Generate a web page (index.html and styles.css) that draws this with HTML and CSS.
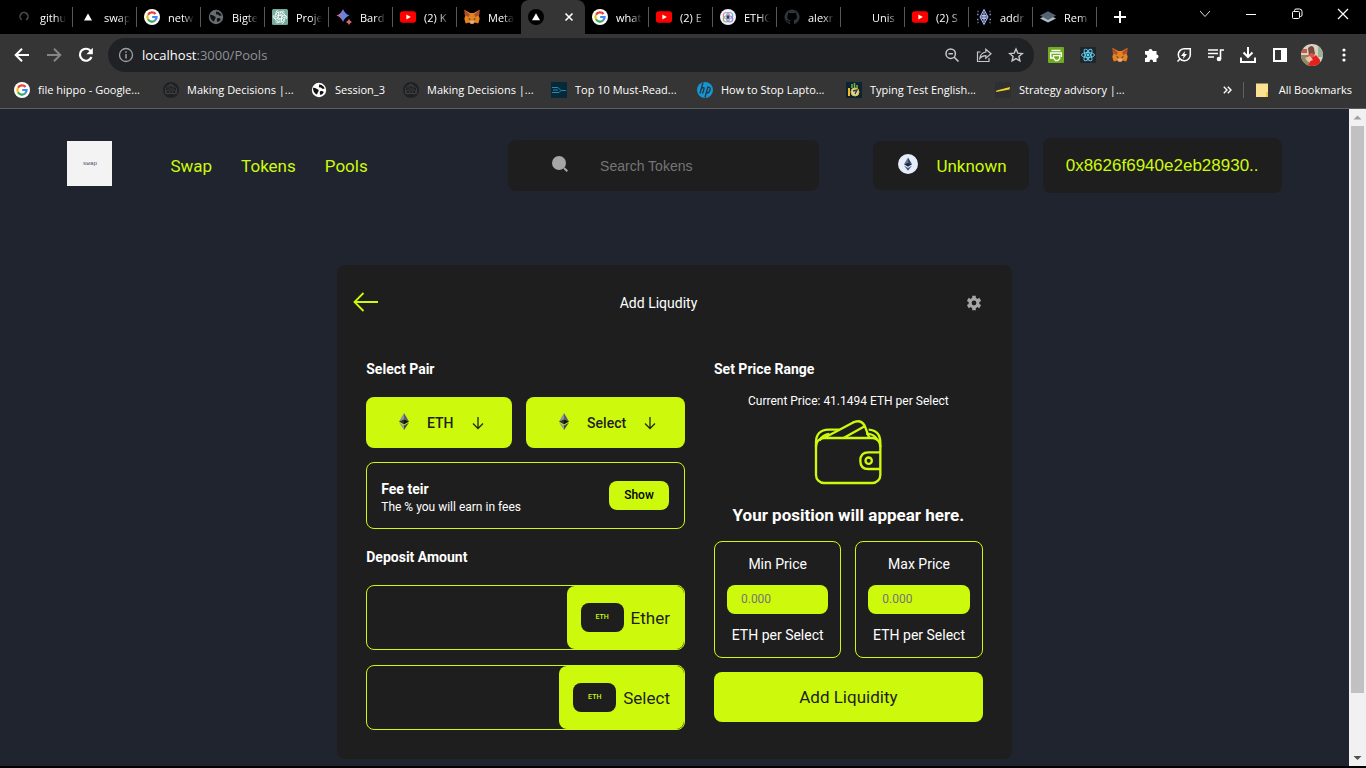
FILE: index.html
```html
<!DOCTYPE html>
<html lang="en">
<head>
<meta charset="utf-8">
<title>Swap - Pools</title>
<link rel="stylesheet" href="styles.css">
</head>
<body>
<svg class="defs" aria-hidden="true">
  <symbol id="google" viewBox="0 0 16 16">
    <circle cx="8" cy="8" r="8" fill="#fff"/>
    <g fill="none" stroke-width="2.2">
      <path d="M11.6 5A4.6 4.6 0 0 0 4 5.7" stroke="#ea4335"/>
      <path d="M4 5.7a4.6 4.6 0 0 0 0 4.6" stroke="#fbbc05"/>
      <path d="M4 10.3a4.6 4.6 0 0 0 7 1.2" stroke="#34a853"/>
      <path d="M11 11.5A4.6 4.6 0 0 0 12.6 8H8.2" stroke="#4285f4"/>
    </g>
  </symbol>
  <symbol id="youtube" viewBox="0 0 16 16">
    <rect y="2.3" width="16" height="11.4" rx="2.6" fill="#f00"/>
    <path d="M6.4 5.4v5.2L10.8 8z" fill="#fff"/>
  </symbol>
  <symbol id="github" viewBox="0 0 16 16">
    <path d="M8 .5a7.5 7.5 0 0 0-2.4 14.6c.4.1.5-.2.5-.4v-1.4c-2 .4-2.5-.9-2.5-.9-.4-.9-.9-1.1-.9-1.1-.7-.5.1-.5.1-.5.8.1 1.200.8 1.200.8.7 1.200 1.800.8 2.200.6.1-.5.300-.8.500-1-1.700-.2-3.400-.8-3.400-3.700 0-.8.300-1.500.8-2-.1-.2-.4-1 .1-2.100 0 0 .6-.2 2 .8a7 7 0 0 1 3.800 0c1.400-1 2-.8 2-.8.5 1.100.2 1.900.1 2.100.5.500.8 1.200.8 2 0 2.900-1.700 3.500-3.400 3.700.3.200.5.7.5 1.400v2.100c0 .2.1.500.5.400A7.500 7.500 0 0 0 8 .5z" fill="currentColor"/>
  </symbol>
  <symbol id="globe" viewBox="0 0 16 16">
    <circle cx="8" cy="8" r="7.200" fill="currentColor"/>
    <path d="M2 6c2-.6 3 1 4.500 1.300S8 9 7 10s0 2-1.300 2.600C3.500 11.500 2 9 2 6zM8 2.500c.5 1-.5 1.500 0 2.500s2 0 2.500 1S13 7 13.500 6.500 11 2 8 2.500zM9 9.500c1.500-1 3 0 3.800.5-.6 1.500-1.800 2.500-3.300 3-.8-1-.8-2.500-.5-3.500z" fill="#111"/>
  </symbol>
  <symbol id="metamask" viewBox="0 0 16 16">
    <path d="M.5.700 6.200 4h3.600L15.500.700l-.8 4.500.5.400-.5 1 1 3.200-1.400 4.700-3.500-1-1.600 1.500H6.800l-1.600-1.500-3.500 1-1.400-4.700 1-3.200-.5-1 .5-.4z" fill="#e8821e"/>
    <path d="m.5.700 5.200 4.500L5 8l-3.700-1.400L.5 5.300zM15.500.700l-5.200 4.500L11 8l3.700-1.400.8-1.300z" fill="#a9512c"/>
    <path d="m4 9 2.500 1L6 11.200zM12 9l-2.500 1 .5 1.200z" fill="#2b3846"/>
    <path d="m5.500 12.500 1.200-.8h2.600l1.200.8-1.300 1.800H6.800z" fill="#cbb8a9"/>
  </symbol>
  <symbol id="emblem" viewBox="0 0 16 16">
    <circle cx="8" cy="8" r="8" fill="#202124"/>
    <g fill="none" stroke="#3d3d3d"><circle cx="8" cy="5.500" r="2"/><circle cx="5" cy="10" r="2"/><circle cx="11" cy="10" r="2"/><path d="M2.500 6 8 2l5.500 4v5.500H2.500z"/></g>
  </symbol>
  <symbol id="ether" viewBox="0 0 10 17">
    <path d="M5 0 0 8.500 5 6.200z" fill="#8a92a0"/><path d="m5 0 5 8.500L5 6.200z" fill="#5c6068"/>
    <path d="M0 8.500 5 6.200v5.300z" fill="#33343a"/><path d="m10 8.500-5-2.300v5.300z" fill="#141418"/>
    <path d="m0 9.600 5 3V17z" fill="#939a8f"/><path d="m10 9.600-5 3V17z" fill="#474a4c"/>
  </symbol>
  <symbol id="down" viewBox="0 0 12 14">
    <path d="M6 1v11.500M1 7.500l5 5 5-5" fill="none" stroke="#222a14" stroke-width="1.300"/>
  </symbol>
</svg>

<header class="browser">
  <div class="tabs">
    <div class="tab"><svg class="ico" viewBox="0 0 16 16"><circle cx="8" cy="7.500" r="4" fill="none" stroke="#4b4b4b" stroke-width="1.600" stroke-dasharray="20 5" transform="rotate(125 8 7.500)"/></svg><span>githu</span></div>
    <div class="tab"><svg class="ico" viewBox="0 0 16 16"><path d="m8 4.500 4 7H4z" fill="#fff"/></svg><span>swap</span></div>
    <div class="tab"><svg class="ico"><use href="#google"/></svg><span>netw</span></div>
    <div class="tab"><svg class="ico grey"><use href="#globe"/></svg><span>Bigte</span></div>
    <div class="tab"><svg class="ico" viewBox="0 0 16 16"><rect width="16" height="16" rx="1.500" fill="#75a99c"/><g fill="none" stroke="#fff" stroke-width=".8"><path id="petal" d="M8 6.200V4.500a2.600 2.600 0 0 1 4.700-1.300M8 6.200l3.500-2"/><use href="#petal" transform="rotate(60 8 8)"/><use href="#petal" transform="rotate(120 8 8)"/><use href="#petal" transform="rotate(180 8 8)"/><use href="#petal" transform="rotate(240 8 8)"/><use href="#petal" transform="rotate(300 8 8)"/><circle cx="8" cy="8" r="1.800"/><circle cx="8" cy="8" r="5.200"/></g></svg><span>Proje</span></div>
    <div class="tab"><svg class="ico" viewBox="0 0 16 16"><linearGradient id="bg"><stop offset="0" stop-color="#e06b7c"/><stop offset=".5" stop-color="#6f7fe0"/><stop offset="1" stop-color="#4d8be8"/></linearGradient><path d="M7 0q1.800 4.700 6.500 6.500Q8.800 8.300 7 13 5.200 8.300.5 6.500 5.200 4.700 7 0z" fill="url(#bg)"/><path d="M13 10q.8 2.200 3 3-2.200.8-3 3-.8-2.200-3-3 2.200-.8 3-3z" fill="#d96570"/></svg><span>Bard</span></div>
    <div class="tab"><svg class="ico"><use href="#youtube"/></svg><span>(2) K</span></div>
    <div class="tab bare"><svg class="ico"><use href="#metamask"/></svg><span>Meta</span></div>
    <div class="tab active"><svg class="ico" viewBox="0 0 16 16"><circle cx="8" cy="8" r="8" fill="#000"/><path d="m8 4.300 4 7H4z" fill="#fff"/></svg><button class="plain" aria-label="Close tab"><svg width="10" height="10" viewBox="0 0 10 10"><path d="m1.500 1.500 7 7m0-7-7 7" stroke="#fff" stroke-width="1.600"/></svg></button></div>
    <div class="tab"><svg class="ico"><use href="#google"/></svg><span>what</span></div>
    <div class="tab"><svg class="ico"><use href="#youtube"/></svg><span>(2) E</span></div>
    <div class="tab"><svg class="ico" viewBox="0 0 16 16"><circle cx="8" cy="8" r="8" fill="#f4f1f8"/><g fill="none" stroke-width="1.200"><circle cx="6.300" cy="6.500" r="3" stroke="#e5899f"/><circle cx="9.700" cy="6.500" r="3" stroke="#6cb8e4"/><circle cx="6.300" cy="10" r="3" stroke="#7dba85"/><circle cx="9.700" cy="10" r="3" stroke="#a182dc"/></g><path d="m8 5.500 1.500 2.500L8 10.500 6.500 8z" fill="#3b3473"/></svg><span>ETHG</span></div>
    <div class="tab"><svg class="ico dim"><use href="#github"/></svg><span>alexr</span></div>
    <div class="tab"><span class="ico"></span><span>Unis</span></div>
    <div class="tab"><svg class="ico"><use href="#youtube"/></svg><span>(2) S</span></div>
    <div class="tab"><svg class="ico" viewBox="0 0 16 16"><path d="m8 .5 4 7.500-4 7.500L4 8z" fill="#242d48" stroke="#b5c3f3"/><path d="M4 8h8M8 3v10M5.500 6.500h5M5.500 9.500h5" stroke="#b5c3f3"/><path d="M1.500 2.500h1M13.500 2.500h1M1 5.500h1.500M13.500 5.500H15M1 10.500h1.500M13.500 10.500H15M1.500 13.500h1M13.500 13.500h1" stroke="#8495cc" stroke-width="1.500"/></svg><span>addr</span></div>
    <div class="tab"><svg class="ico" viewBox="0 0 16 16"><path d="m0 9.500 8-4 8 4-8 4z" fill="#aebbc7"/><path d="m0 6.500 8-4.200 8 4.200-8 4.500z" fill="#566371"/></svg><span>Rem</span></div>
    <button class="plain add" aria-label="New tab"><svg width="12" height="12" viewBox="0 0 12 12"><path d="M6 0v12M0 6h12" stroke="#fff" stroke-width="2"/></svg></button>
    <div class="window">
      <button class="plain" aria-label="Search tabs"><svg width="12" height="12" viewBox="0 0 12 12"><path d="m1 3 5 5.500L11 3" fill="none" stroke="#ddd"/></svg></button>
      <button class="plain" aria-label="Minimize"><svg width="12" height="12" viewBox="0 0 12 12"><path d="M1 6.500h10" stroke="#fff"/></svg></button>
      <button class="plain" aria-label="Restore"><svg width="12" height="12" viewBox="0 0 12 12"><path d="M3.500 3V2.500Q3.500 1 5 1h3.500Q11 1 11 3.500V7q0 1.500-1.500 1.500H9" fill="none" stroke="#fff"/><rect x="1.500" y="3.500" width="7" height="7" rx="1" fill="none" stroke="#fff"/></svg></button>
      <button class="plain" aria-label="Close"><svg width="12" height="12" viewBox="0 0 12 12"><path d="m1 1 10 10M11 1 1 11" stroke="#fff" stroke-width="1.200"/></svg></button>
    </div>
  </div>

  <div class="toolbar">
    <button class="plain" aria-label="Back"><svg width="16" height="16" viewBox="0 0 16 16"><path d="M15 8H2m6-6.300L1.700 8 8 14.300" fill="none" stroke="#fff" stroke-width="2"/></svg></button>
    <button class="plain" aria-label="Forward"><svg width="16" height="16" viewBox="0 0 16 16"><path d="M1 8h13M8 1.700 14.300 8 8 14.300" fill="none" stroke="#858585" stroke-width="2"/></svg></button>
    <button class="plain" aria-label="Reload"><svg width="16" height="16" viewBox="0 0 16 16"><path d="M13.500 10A6 6 0 1 1 12.800 4.200" fill="none" stroke="#fff" stroke-width="2.200"/><path d="M14.800.8v6.400H8.400z" fill="#fff"/></svg></button>
    <div class="omnibox">
      <svg width="16" height="16" viewBox="0 0 16 16"><circle cx="8" cy="8" r="6.500" fill="none" stroke="#9aa0a6" stroke-width="1.300"/><path d="M8 7v4.500M8 4.300v1.500" stroke="#9aa0a6" stroke-width="1.500"/></svg>
      <p class="url"><b>localhost</b>:3000/Pools</p>
      <button class="plain" aria-label="Zoom"><svg width="16" height="16" viewBox="0 0 16 16"><circle cx="6.700" cy="6.700" r="4.700" fill="none" stroke="#c7c7c7" stroke-width="1.500"/><path d="m10.200 10.200 4.300 4.300M4.500 6.700h4.400" stroke="#c7c7c7" stroke-width="1.600"/></svg></button>
      <button class="plain" aria-label="Share"><svg width="16" height="16" viewBox="0 0 16 16"><path d="M4.500 5H1.500v9.500H13V11" fill="none" stroke="#c7c7c7" stroke-width="1.200"/><path d="M9.800 2.200 15 6.700l-5.200 4.500V8.700c-3 0-4.500.8-6 2.800.4-3.500 2.500-6 6-6.500z" fill="none" stroke="#c7c7c7" stroke-width="1.200"/></svg></button>
      <button class="plain" aria-label="Bookmark"><svg width="16" height="16" viewBox="0 0 16 16"><path d="m8 2 1.800 4.100 4.500.4-3.400 3 1 4.400L8 11.600l-3.900 2.300 1-4.400-3.400-3 4.500-.4z" fill="none" stroke="#c7c7c7" stroke-width="1.400"/></svg></button>
    </div>
    <div class="extensions">
      <svg class="ico" viewBox="0 0 16 16"><rect width="16" height="16" rx="1" fill="#6fac1f"/><path d="M3.500 3.500h9" stroke="#fff" stroke-width="1.500"/><path d="M5 11H2.700V6h10.600v4" fill="none" stroke="#fff" stroke-width="1.500"/><path d="M5.500 8.700h6.200v3L9.700 13.500H7.500l-2-2.500z" fill="none" stroke="#fff" stroke-width="1.300"/></svg>
      <svg class="ico" viewBox="0 0 16 16"><rect width="16" height="16" fill="#1f252d"/><g fill="none" stroke="#61dafb" stroke-width=".9"><ellipse cx="8" cy="8" rx="6.500" ry="2.500"/><ellipse cx="8" cy="8" rx="6.500" ry="2.500" transform="rotate(60 8 8)"/><ellipse cx="8" cy="8" rx="6.500" ry="2.500" transform="rotate(120 8 8)"/></g><circle cx="8" cy="8" r="1.400" fill="#61dafb"/></svg>
      <svg class="ico"><use href="#metamask"/></svg>
      <svg class="ico" viewBox="0 0 16 16"><path d="M1 4h3.500a2 2 0 1 1 4 0H12.500v3.500a2 2 0 1 1 0 4V15H9v-.7a1.700 1.700 0 0 0-3.400 0v.7H1v-4h.5a1.700 1.700 0 0 0 0-3.500H1z" fill="#fff"/></svg>
      <svg class="ico" viewBox="0 0 16 16"><path d="M14.300 1.700H8.500a6 6 0 1 0 5.800 6zM4 12 1.500 14.500" fill="none" stroke="#fff" stroke-width="1.500"/><path d="M9 4 5 9h2.500L7 12l4-5H8.500z" fill="#fff"/></svg>
      <svg class="ico" viewBox="0 0 16 16"><path d="M0 3h10M0 6.500h10M0 10h6M12.500 12V3H16" fill="none" stroke="#fff" stroke-width="1.600"/><circle cx="11" cy="12" r="2.300" fill="#fff"/></svg>
      <svg class="ico" viewBox="0 0 16 16"><path d="M8 0v9.500M3.500 5.500 8 10l4.500-4.500M1 10.500V15h14v-4.500" fill="none" stroke="#fff" stroke-width="2"/></svg>
      <svg class="ico" viewBox="0 0 16 16"><path d="M2 2h12v12H2z" fill="none" stroke="#fff" stroke-width="2"/><path d="M9 2h5v12H9z" fill="#fff"/></svg>
      <svg class="avatar" viewBox="0 0 22 22"><clipPath id="round"><circle cx="11" cy="11" r="11"/></clipPath><g clip-path="url(#round)"><path d="M0 0h22v22H0z" fill="#d8d3c4"/><path d="M0 11h8v11H0z" fill="#8c8a63"/><path d="M17 2h5v11h-5z" fill="#9bb193"/><path d="M0 5h6v4H0z" fill="#c55a4a"/><path d="M7 4q4-4 6 0l1 6-6 2z" fill="#7b4a3a"/><path d="m6 12 4-3 4 1-2 5-5 1z" fill="#d8574b"/><path d="m7 22 3-7 5-4 4 5v6z" fill="#e3211d"/><path d="m4 14 5-2 3 4-5 2z" fill="#f0c0a6"/></g></svg>
      <svg class="ico" viewBox="0 0 16 16"><g fill="#fff"><circle cx="8" cy="3" r="1.600"/><circle cx="8" cy="8" r="1.600"/><circle cx="8" cy="13" r="1.600"/></g></svg>
    </div>
  </div>

  <nav class="bookmarks" aria-label="Bookmarks">
    <a class="w149" href="#"><svg class="ico"><use href="#google"/></svg>file hippo - Google...</a>
    <a class="w148" href="#"><svg class="ico"><use href="#emblem"/></svg>Making Decisions |...</a>
    <a class="w92" href="#"><svg class="ico white"><use href="#globe"/></svg>Session_3</a>
    <a class="w148" href="#"><svg class="ico"><use href="#emblem"/></svg>Making Decisions |...</a>
    <a class="w146" href="#"><svg class="ico" viewBox="0 0 16 16"><rect width="16" height="16" fill="#05293a"/><path d="M1 5.500h6l3 3h5M2 8h5M1 10.500h7l2-2" fill="none" stroke="#298aa9"/></svg>Top 10 Must-Read...</a>
    <a class="w149" href="#"><svg class="ico" viewBox="0 0 16 16"><circle cx="8" cy="8" r="8" fill="#1595d1"/><path d="M6 .5 3 11.500M4.500 6.500q3-2 2.500.5l-1.500 4.500M11 4.500 8 15.500M10.500 5.500q3.500-1 2.500 2.500-1 3.500-4 3" fill="none" stroke="#253645" stroke-width="1.300"/></svg>How to Stop Lapto...</a>
    <a class="w149" href="#"><svg class="ico" viewBox="0 0 16 16"><rect width="16" height="16" fill="#0d2332"/><path d="M6 6V2M8.500 6V1M11 6V3" stroke="#70b744" stroke-width="1.500"/><path d="M3 6v8" stroke="#e5bd2e" stroke-width="2"/><circle cx="9" cy="10" r="4" fill="#ddd6a1" stroke="#e5bd2e"/><path d="m7 9 4-1-2 4" fill="none" stroke="#24384a" stroke-width="1.300"/></svg>Typing Test English...</a>
    <a href="#"><svg class="ico" viewBox="0 0 16 16"><rect width="16" height="16" fill="#2e2e33"/><path d="M1.500 8.500 15 5l-.5 2.500L1 10z" fill="#f1d51c"/></svg>Strategy advisory |...</a>
    <button class="plain more" aria-label="More bookmarks"><svg width="9" height="8" viewBox="0 0 9 8"><path d="m.8.800 3.200 3.200-3.200 3.200M4.800.800 8 4 4.800 7.200" fill="none" stroke="#fff" stroke-width="1.400"/></svg></button>
    <a class="all" href="#"><svg class="ico" viewBox="0 0 16 16"><path d="M2 1.500h12V15H2z" fill="#fbe192"/><path d="M12 10h2v5h-2z" fill="#f4c84b"/></svg>All Bookmarks</a>
  </nav>
</header>

<div class="viewport">
  <main class="page">
    <header class="site">
      <div class="brand">
        <a class="logo" href="#">swap</a>
        <nav class="links"><a href="#">Swap</a><a href="#">Tokens</a><a href="#">Pools</a></nav>
      </div>
      <label class="search">
        <svg width="16" height="16" viewBox="0 0 16 16"><circle cx="7" cy="7" r="7" fill="#a6a6a6"/><path d="m12 12 3.300 3.300" stroke="#a6a6a6" stroke-width="2"/></svg>
        <input type="text" placeholder="Search Tokens" aria-label="Search Tokens">
      </label>
      <div class="account">
        <button class="network"><svg width="20" height="20" viewBox="0 0 20 20"><circle cx="10" cy="10" r="10" fill="#e6eefb"/><path d="m10 3.500-4 6.800 4-1.800z" fill="#61749a"/><path d="m10 3.500 4 6.800-4-1.800z" fill="#34425f"/><path d="m6 10.300 4-1.800 4 1.800-4 2.400z" fill="#1c2740"/><path d="m6 11.500 4 2.400 4-2.400-4 5.300z" fill="#43557b"/></svg>Unknown</button>
        <button class="wallet">0x8626f6940e2eb28930..</button>
      </div>
    </header>

    <section class="card">
      <div class="card-head">
        <button class="plain" aria-label="Back"><svg width="26" height="20" viewBox="0 0 26 20"><path d="M25 10H2M10.500 1l-9 9 9 9" fill="none" stroke="#cdfa0c" stroke-width="1.800"/></svg></button>
        <h1>Add Liqudity</h1>
        <button class="plain gear" aria-label="Settings"><svg width="16" height="16" viewBox="0 0 16 16"><g fill="none" stroke="#a6a6a6"><circle cx="8" cy="8" r="3.900" stroke-width="3"/><path d="M8 .8v2.700M8 12.500v2.700M1.800 4.400l2.300 1.300M11.900 10.300l2.300 1.300M14.200 4.400l-2.300 1.300M4.100 10.300l-2.300 1.300" stroke-width="3.600"/></g></svg></button>
      </div>
      <div class="card-body">
        <div class="col">
          <h2>Select Pair</h2>
          <div class="pair">
            <button class="eth"><svg width="10" height="17"><use href="#ether"/></svg>ETH<svg class="arrow"><use href="#down"/></svg></button>
            <button class="sel"><svg width="10" height="17"><use href="#ether"/></svg>Select<svg class="arrow"><use href="#down"/></svg></button>
          </div>
          <div class="fee">
            <div><h3>Fee teir</h3><p>The % you will earn in fees</p></div>
            <button>Show</button>
          </div>
          <h2>Deposit Amount</h2>
          <div class="deposits">
            <label class="deposit"><input type="text" aria-label="Ether amount"><span class="unit"><small>ETH</small>Ether</span></label>
            <label class="deposit"><input type="text" aria-label="Select amount"><span class="unit"><small>ETH</small>Select</span></label>
          </div>
        </div>
        <div class="col">
          <h2>Set Price Range</h2>
          <div class="position">
            <p>Current Price: 41.1494 ETH per Select</p>
            <svg width="68" height="66" viewBox="372 492 204 198"><g fill="none" stroke="#cdfa0c" stroke-width="7"><rect x="378" y="549" width="193" height="135" rx="24"/><path d="M378 575v-12q0-38 38-39h32M536 524q35 2 35 40v12M388 557q10-18 30-20M528 536q24 0 34 18"/><path d="m402 549 86-46q24-12 36 9l14 37M462 548l62-34"/><path d="M571 592h-36q-24 0-24 25t24 25h36"/><circle cx="536" cy="617" r="9.500"/></g></svg>
            <h3>Your position will appear here.</h3>
          </div>
          <div class="range">
            <label>Min Price<input type="text" placeholder="0.000"><span>ETH per Select</span></label>
            <label>Max Price<input type="text" placeholder="0.000"><span>ETH per Select</span></label>
          </div>
          <button class="submit">Add Liquidity</button>
        </div>
      </div>
    </section>
  </main>
  <div class="scrollbar" aria-hidden="true">
    <svg width="17" height="17" viewBox="0 0 17 17"><path d="m8.500 6.500 4 4h-8z" fill="#a0a0a0"/></svg>
    <span class="thumb"></span>
    <span class="rest"></span>
    <svg width="17" height="17" viewBox="0 0 17 17"><path d="m8.500 11 4-4h-8z" fill="#505050"/></svg>
  </div>
</div>
</body>
</html>
```

FILE: styles.css
```css
* { box-sizing: border-box; }

body {
  margin: 0;
  min-height: 100vh;
  display: flex;
  flex-direction: column;
  background: #000;
  color: #fff;
  font-family: Roboto, "Liberation Sans", sans-serif;
}

h1, h2, h3, p { margin: 0; }
button, input { font-family: inherit; border: 0; margin: 0; outline: 0; }
button { cursor: pointer; }
a { color: inherit; text-decoration: none; }
svg { display: block; flex: none; }

.defs { display: none; }
.plain { display: flex; align-items: center; justify-content: center; padding: 0; background: none; }
.ico { display: block; width: 16px; height: 16px; flex: none; }
.grey { color: #696d72; }
.white { color: #fff; }
.dim { color: #30343a; }

/* Browser frame */
.browser {
  font-family: "Open Sans", "Noto Sans", sans-serif;
  font-size: 11px;
  background: #353535;
  border-bottom: 1px solid #5c5d61;
}

.tabs { display: flex; height: 34px; padding-left: 9px; background: #000; }
.tab {
  position: relative;
  display: flex;
  align-items: center;
  gap: 8px;
  width: 64px;
  padding: 0 4px 0 7px;
}
.tab span:last-child {
  flex: 1;
  white-space: nowrap;
  -webkit-mask-image: linear-gradient(90deg, #000 50%, transparent 90%);
  mask-image: linear-gradient(90deg, #000 50%, transparent 90%);
}
.tab::after {
  content: "";
  position: absolute;
  right: 0;
  top: 7px;
  width: 1px;
  height: 20px;
  background: #55565a;
}
.tab.bare::after, .tab.active::after { display: none; }
.tab.active { justify-content: space-between; background: #353535; border-radius: 8px 8px 0 0; padding-right: 11px; }
.add { width: 45px; }
.window { display: flex; margin-left: auto; height: 28px; }
.window button { width: 46px; }

.toolbar { display: flex; align-items: center; height: 42px; padding: 0 14px; }
.toolbar > button { width: 16px; margin-right: 16px; }
.omnibox {
  flex: 1;
  display: flex;
  align-items: center;
  gap: 16px;
  height: 34px;
  padding: 0 10px;
  margin-right: 14px;
  border-radius: 17px;
  background: #202124;
}
.toolbar > button + .omnibox { margin-left: -2px; }
.url { flex: 1; margin-left: -8px; color: #8f9296; font-size: 13px; }
.url b { font-weight: 400; color: #fff; }
.extensions { display: flex; align-items: center; gap: 16px; }
.avatar { width: 22px; height: 22px; margin: 0 -3px; }

.bookmarks { display: flex; align-items: center; height: 32px; padding: 0 14px 5px; }
.bookmarks a { display: flex; align-items: center; gap: 8px; white-space: nowrap; }
.w149 { width: 149px; }
.w148 { width: 148px; }
.w146 { width: 146px; }
.w92 { width: 92px; }
.more { width: 30px; height: 16px; margin-left: auto; }
.bookmarks .all { gap: 9px; padding-left: 10px; border-left: 1px solid #5f6064; }

/* Page */
.viewport { flex: 1; display: flex; margin-bottom: 2px; background: #20242f; }
.page { flex: 1; min-width: 0; padding-bottom: 7px; }
.scrollbar { display: flex; flex-direction: column; width: 17px; background: #f1f1f1; }
.thumb { flex: 567; margin: 0 2px; background: #c1c1c1; }
.rest { flex: 56; }

.site {
  display: grid;
  grid-template-columns: 441fr 311fr 463fr;
  align-items: center;
  padding: 29px 5% 0;
  color: #cdfa0c;
}
.brand { display: flex; align-items: center; gap: 58px; }
.logo {
  display: flex;
  align-items: center;
  justify-content: center;
  width: 45px;
  height: 45px;
  margin-bottom: 4px;
  background: #f3f3f3;
  color: #4c4c68;
  font: 6px "Liberation Mono", monospace;
}
.links { display: flex; gap: 29px; font-size: 17px; line-height: 20px; }
.search {
  display: flex;
  align-items: center;
  gap: 30px;
  height: 51px;
  padding-left: 44px;
  border-radius: 8px;
  background: #1e1e1e;
}
.search svg { margin-bottom: 3px; }
.search input {
  flex: 1;
  min-width: 0;
  background: none;
  color: #fff;
  font: 14px "Liberation Sans", Arial, sans-serif;
}
.search input::placeholder { color: #757575; }
.account { display: flex; align-items: center; justify-content: flex-end; gap: 14px; }
.account button { border-radius: 8px; background: #1e1e1e; color: inherit; white-space: nowrap; }
.network { display: flex; align-items: center; gap: 18px; height: 49px; padding: 0 22px 0 25px; font-size: 17px; }
.network svg { margin-bottom: 3px; }
.account .wallet { height: 55px; padding: 0 23px; font: 17px "Liberation Sans", Arial, sans-serif; }

.card { width: 50%; margin: 72px auto 0; border-radius: 8px; background: #1e1e1e; }
.card-head { display: flex; align-items: center; justify-content: space-between; height: 74px; padding: 0 2px 0 16px; }
.card-head h1 { padding-top: 2px; font-size: 14px; font-weight: 400; }
.gear { width: 72px; padding-top: 2px; }
.card-body { display: grid; grid-template-columns: 319fr 269fr; gap: 29px; padding: 20px 29px 29px; }
.col { display: flex; flex-direction: column; min-width: 0; }
.col h2 { font-size: 14px; line-height: 20px; }

.pair { display: flex; gap: 14px; margin: 18px 0 14px; }
.pair button {
  display: flex;
  align-items: center;
  justify-content: center;
  gap: 18px;
  height: 51px;
  padding: 0 0 0 4px;
  border-radius: 8px;
  background: #cdfa0c;
  color: #1e1e1e;
  font-size: 14px;
  font-weight: 500;
}
.pair svg:first-child { margin-bottom: 3px; }
.eth { flex: 146; }
.sel { flex: 159; }
.arrow { width: 12px; height: 14px; }

.fee {
  display: flex;
  align-items: center;
  justify-content: space-between;
  height: 67px;
  margin-bottom: 18px;
  padding: 0 15px 0 14px;
  border: 1px solid #cdfa0c;
  border-radius: 8px;
}
.fee div { padding-top: 4px; }
.fee h3 { font-size: 14px; line-height: 20px; }
.fee p { font-size: 12px; line-height: 17px; }
.fee button { width: 60px; height: 29px; padding: 0 0 2px; border-radius: 8px; background: #cdfa0c; font-size: 12px; font-weight: 500; }

.deposits { display: grid; grid-template-columns: minmax(0, 1fr); gap: 15px; margin-top: 18px; }
.deposit { display: flex; height: 65px; border: 1px solid #cdfa0c; border-radius: 8px; }
.deposit input { flex: 1; min-width: 0; padding: 0 14px; background: none; color: #fff; font-size: 17px; }
.unit {
  display: flex;
  align-items: center;
  gap: 7px;
  padding: 0 14px;
  border-radius: 8px;
  background: #cdfa0c;
  color: #1e1e1e;
  font-size: 17px;
  line-height: 20px;
}
.unit small {
  width: 43px;
  border-radius: 8px;
  background: #1e1e1e;
  color: #cdfa0c;
  font-size: 7px;
  font-weight: 500;
  line-height: 29px;
  text-align: center;
}

.position { display: flex; flex-direction: column; align-items: center; margin: 14px 0 16px; }
.position p { font-size: 12px; line-height: 16px; }
.position svg { margin: 10px 0 20px; }
.position h3 { font-size: 17px; line-height: 20px; white-space: nowrap; }

.range { display: grid; grid-template-columns: 1fr 1fr; gap: 14px; margin-bottom: 14px; }
.range label {
  display: flex;
  flex-direction: column;
  align-items: center;
  gap: 11px;
  padding: 12px;
  border: 1px solid #cdfa0c;
  border-radius: 8px;
  font-size: 14px;
  line-height: 20px;
}
.range input { width: 100%; height: 29px; padding: 0 14px 2px; border-radius: 8px; background: #cdfa0c; color: #1e1e1e; font-size: 12px; }
.range input::placeholder { color: #757575; }
.submit { height: 50px; padding: 0; border-radius: 8px; background: #cdfa0c; color: #1e1e1e; font-size: 17px; }
```
